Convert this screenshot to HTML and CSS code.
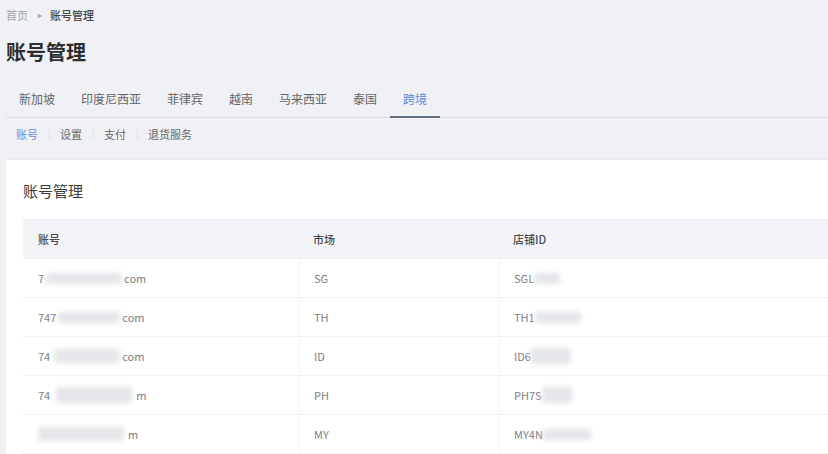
FILE: index.html
```html
<!DOCTYPE html>
<html lang="zh-CN">
<head>
<meta charset="utf-8">
<title>账号管理</title>
<link rel="stylesheet" href="styles.css">
</head>
<body>
<div class="page">
  <div class="crumbs">
    <span class="crumb-home">首页</span>
    <span class="crumb-arrow">▸</span>
    <span class="crumb-current">账号管理</span>
  </div>
  <h1 class="title">账号管理</h1>
  <div class="tabs">
    <span class="tab">新加坡</span>
    <span class="tab">印度尼西亚</span>
    <span class="tab">菲律宾</span>
    <span class="tab">越南</span>
    <span class="tab">马来西亚</span>
    <span class="tab">泰国</span>
    <span class="tab active">跨境</span>
  </div>
  <div class="subnav">
    <span class="sub active">账号</span>
    <span class="sep"></span>
    <span class="sub">设置</span>
    <span class="sep"></span>
    <span class="sub">支付</span>
    <span class="sep"></span>
    <span class="sub">退货服务</span>
  </div>
  <div class="card">
    <div class="card-title">账号管理</div>
    <div class="table">
      <div class="row head">
        <div class="cell c1">账号</div>
        <div class="cell c2">市场</div>
        <div class="cell c3">店铺ID</div>
      </div>
      <div class="row">
        <div class="cell c1">7<span class="mask m1"></span>com</div>
        <div class="cell c2">SG</div>
        <div class="cell c3">SGL<span class="mask s1"></span></div>
      </div>
      <div class="row">
        <div class="cell c1">747<span class="mask m2"></span>com</div>
        <div class="cell c2">TH</div>
        <div class="cell c3">TH1<span class="mask s2"></span></div>
      </div>
      <div class="row">
        <div class="cell c1">74<span class="mask m3"></span>com</div>
        <div class="cell c2">ID</div>
        <div class="cell c3">ID6<span class="mask s3"></span></div>
      </div>
      <div class="row">
        <div class="cell c1">74<span class="mask m4"></span>m</div>
        <div class="cell c2">PH</div>
        <div class="cell c3">PH7S<span class="mask s4"></span></div>
      </div>
      <div class="row">
        <div class="cell c1"><span class="mask m5"></span>m</div>
        <div class="cell c2">MY</div>
        <div class="cell c3">MY4N<span class="mask s5"></span></div>
      </div>
    </div>
  </div>
</div>
</body>
</html>
```

FILE: styles.css
```css
* { box-sizing: border-box; }
html, body { margin: 0; padding: 0; }
body {
  background: #eff1f4;
  font-family: "Noto Sans CJK SC", "Noto Sans", sans-serif;
  color: #333;
  width: 828px;
  height: 454px;
  overflow: hidden;
}
.page {
  padding-left: 6px;
  height: 454px;
  overflow: hidden;
}

.crumbs {
  display: flex;
  align-items: center;
  height: 16px;
  margin-top: 7px;
  font-size: 11px;
  line-height: 16px;
}
.crumb-home { color: #a2a4a8; }
.crumb-arrow { color: #a2a4a8; font-size: 8px; margin: 0 8px 0 10px; }
.crumb-current { color: #444; font-weight: 500; }

.title {
  margin: 15px 0 0;
  font-size: 20px;
  line-height: 28px;
  font-weight: 700;
  color: #2e2e2e;
}

.tabs {
  display: flex;
  margin-top: 24px;
  border-bottom: 1px solid #d9dce1;
}
.tab {
  padding: 0 13px 8px;
  font-size: 12px;
  line-height: 18px;
  color: #666;
  border-bottom: 2px solid transparent;
  margin-bottom: -1px;
}
.tab.active {
  color: #5b86d6;
  border-bottom-color: #5f6f84;
}

.subnav {
  display: flex;
  align-items: center;
  height: 16px;
  margin-top: 8px;
  padding-left: 10px;
  font-size: 11px;
  line-height: 16px;
}
.sub { color: #666; }
.sub.active { color: #6a8fdc; }
.sep {
  width: 1px;
  height: 9px;
  background: #dcdfe3;
  margin: 0 10px 0 11px;
}

.card {
  margin-top: 17px;
  background: #fff;
  height: 296px;
  padding: 21px 0 0 17px;
  border-top: 1px solid #e8eaed;
}
.card-title {
  font-size: 15px;
  line-height: 20px;
  color: #3a3a3a;
}

.table {
  margin-top: 18px;
  border-top: 1px solid #eceef1;
}
.row {
  display: flex;
  height: 39px;
  border-bottom: 1px solid #eff1f3;
  font-size: 11px;
  color: #7c7e82;
}
.row.head {
  height: 39px;
  background: #f2f4f7;
  color: #4a4a4a;
  font-weight: 500;
}
.cell {
  display: flex;
  align-items: center;
  padding-left: 14px;
}
.row:not(.head) .cell + .cell { border-left: 1px solid #f1f2f4; }
.c1 { width: 276px; padding-left: 15px; }
.c2 { width: 200px; }
.c3 { flex: 1; }

.mask {
  display: inline-block;
  height: 11px;
  background: #e4e6e9;
  filter: blur(2.5px);
  border-radius: 2px;
}
.m1 { width: 76px; margin: 0 2px; }
.m2 { width: 62px; margin: 0 2px; }
.m3 { width: 66px; margin: 0 2px 0 4px; height: 14px; }
.m4 { width: 76px; margin: 0 4px 0 6px; height: 16px; }
.m5 { width: 86px; margin: 0 4px 0 0; height: 14px; }
.s1 { width: 26px; }
.s2 { width: 46px; }
.s3 { width: 40px; height: 16px; }
.s4 { width: 30px; height: 16px; }
.s5 { width: 48px; }
```
